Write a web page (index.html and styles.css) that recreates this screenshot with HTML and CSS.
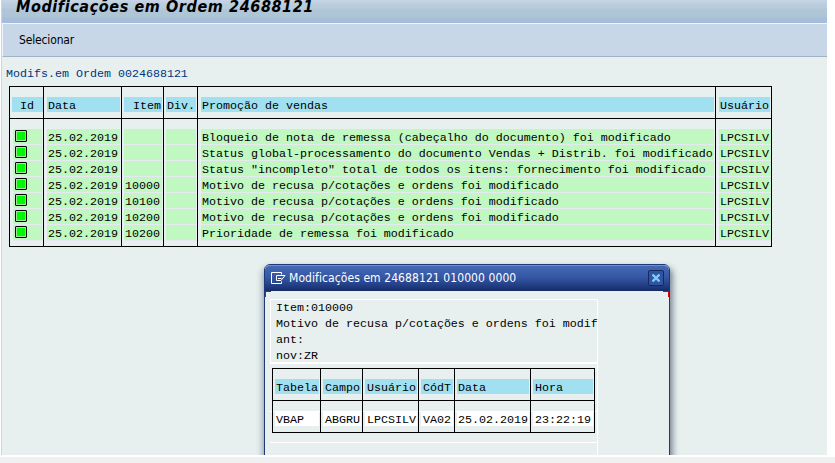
FILE: index.html
```html
<!DOCTYPE html>
<html lang="pt">
<head>
<meta charset="utf-8">
<title>Modificações em Ordem 24688121</title>
<link rel="stylesheet" href="styles.css">
</head>
<body>
<main class="screen">
  <header class="titlebar"><h1>Modificações em Ordem 24688121</h1></header>
  <nav class="toolbar"><span>Selecionar</span></nav>
  <section class="content">
    <p class="caption">Modifs.em Ordem 0024688121</p>
    <table class="list changes">
      <colgroup><col class="w34"><col class="w78"><col class="w42"><col class="w34"><col class="w518"><col class="w57"></colgroup>
      <thead><tr><th><b class="c">Id</b></th><th><b>Data</b></th><th><b class="r">Item</b></th><th><b class="div">Div.</b></th><th><b>Promoção de vendas</b></th><th><b>Usuário</b></th></tr></thead>
      <tbody>
        <tr class="space"><td></td><td></td><td></td><td></td><td></td><td></td></tr>
        <tr><td><b><i class="led"></i></b></td><td><b>25.02.2019</b></td><td><b></b></td><td><b></b></td><td><b>Bloqueio de nota de remessa (cabeçalho do documento) foi modificado</b></td><td><b>LPCSILV</b></td></tr>
        <tr><td><b><i class="led"></i></b></td><td><b>25.02.2019</b></td><td><b></b></td><td><b></b></td><td><b>Status global-processamento do documento Vendas + Distrib. foi modificado</b></td><td><b>LPCSILV</b></td></tr>
        <tr><td><b><i class="led"></i></b></td><td><b>25.02.2019</b></td><td><b></b></td><td><b></b></td><td><b>Status "incompleto" total de todos os itens: fornecimento foi modificado</b></td><td><b>LPCSILV</b></td></tr>
        <tr><td><b><i class="led"></i></b></td><td><b>25.02.2019</b></td><td><b>10000</b></td><td><b></b></td><td><b>Motivo de recusa p/cotações e ordens foi modificado</b></td><td><b>LPCSILV</b></td></tr>
        <tr><td><b><i class="led"></i></b></td><td><b>25.02.2019</b></td><td><b>10100</b></td><td><b></b></td><td><b>Motivo de recusa p/cotações e ordens foi modificado</b></td><td><b>LPCSILV</b></td></tr>
        <tr><td><b><i class="led"></i></b></td><td><b>25.02.2019</b></td><td><b>10200</b></td><td><b></b></td><td><b>Motivo de recusa p/cotações e ordens foi modificado</b></td><td><b>LPCSILV</b></td></tr>
        <tr><td><b><i class="led"></i></b></td><td><b>25.02.2019</b></td><td><b>10200</b></td><td><b></b></td><td><b>Prioridade de remessa foi modificado</b></td><td><b>LPCSILV</b></td></tr>
        <tr class="end"><td></td><td></td><td></td><td></td><td></td><td></td></tr>
      </tbody>
    </table>
  </section>

  <div class="popup-layer">
    <section class="popup">
      <header class="popup-title">
        <svg class="exit" width="15" height="12" viewBox="0 0 15 12" fill="none" stroke="#fff"><path d="M10.500 2.500V.5H.5V11.500H10.500V9.500M10 3.500H5.500V8.500H10M7 6.500H10.500M10 3.500H14L10 8.500"/></svg>
        <span>Modificações em 24688121 010000 0000</span>
        <button class="close" aria-label="Fechar"><svg width="8" height="8" viewBox="0 0 8 8" stroke="#7cc8fa" stroke-width="2.400"><path d="M.5 .5L7.500 7.500M7.500 .5L.5 7.500"/></svg></button>
      </header>
      <div class="popup-body">
        <div class="info"><p>Item:010000</p><p>Motivo de recusa p/cotações e ordens foi modif</p><p>ant:</p><p>nov:ZR</p></div>
        <div class="details">
          <table class="list fields">
            <colgroup><col class="w48"><col class="w42"><col class="w56"><col class="w36"><col class="w76"><col class="w65"></colgroup>
            <thead><tr><th><b>Tabela</b></th><th><b>Campo</b></th><th><b>Usuário</b></th><th><b>CódT</b></th><th><b>Data</b></th><th><b>Hora</b></th></tr></thead>
            <tbody>
              <tr class="space"><td></td><td></td><td></td><td></td><td></td><td></td></tr>
              <tr><td><b>VBAP</b></td><td><b>ABGRU</b></td><td><b>LPCSILV</b></td><td><b>VA02</b></td><td><b>25.02.2019</b></td><td><b>23:22:19</b></td></tr>
              <tr class="end"><td></td><td></td><td></td><td></td><td></td><td></td></tr>
            </tbody>
          </table>
        </div>
        <div class="rest"></div>
      </div>
    </section>
  </div>
</main>
<footer class="status"></footer>
</body>
</html>
```
FILE: styles.css
```css
* { box-sizing: border-box; }
body { margin: 0; width: 835px; height: 463px; overflow: hidden; background: #fff; font: 11.667px/16px "Liberation Mono", monospace; color: #000; }
h1, p { margin: 0; }
b { font-weight: normal; }
.screen { position: relative; width: 826px; height: 455px; margin-left: 1px; border-left: 1px solid #ccd5d8; background: #e7f0ef; overflow: hidden; }
.titlebar { height: 23px; background: linear-gradient(#c8d6e6 0, #c0cfe0 3px, #b5cddc 6px, #b5cddc 8px, #b4c5d8 9px, #acc6d6 15px, #abc5d6 17px, #abbdd8 18px, #a4bdd9 23px); }
.titlebar h1 { height: 14px; padding-left: 14px; font: italic bold 16px/14px "DejaVu Sans Condensed", "DejaVu Sans", sans-serif; font-stretch: condensed; letter-spacing: .6px; white-space: nowrap; }
.toolbar { height: 34px; border-top: 1px solid #eef5fb; border-bottom: 1px solid #9fb1c4; border-left: 1px solid #eef5fb; background: #c8d7e8; padding: 8px 0 0 16px; font: 12px/16px "DejaVu Sans Condensed", "DejaVu Sans", sans-serif; font-stretch: condensed; letter-spacing: -.15px; }
.content { padding: 9px 0 0 7px; }
.caption { margin-left: -3px; height: 20px; color: #003580; }

.list { table-layout: fixed; border-spacing: 0; border-collapse: separate; }
.list th, .list td { padding: 0; border-left: 1px solid #000; vertical-align: top; text-align: left; font-weight: normal; white-space: pre; }
.list th:last-child, .list td:last-child { border-right: 1px solid #000; }
.list th { height: 32px; border-top: 1px solid #000; padding-top: 10px; }
.list td { height: 16px; }
.list .space td { height: 11px; border-top: 1px solid #000; }
.list .end td { height: 6px; border-bottom: 1px solid #000; }
.list b { display: block; height: 15px; line-height: 18px; margin: 0 1px 0 3px; padding-left: 1px; }
.list th b { background: #a0e0f0; }
.list .c { text-align: center; margin-left: 2px; margin-right: 0; padding-left: 0; padding-right: 1px; }
.list .r { text-align: right; margin-left: 2px; margin-right: 1px; padding-right: 1px; }
.list .div { margin-left: 2px; }
.changes { width: 763px; }
.changes td b { background: #c1f7c1; box-shadow: 0 1px #e7e9f0; }
.changes td:nth-child(3) b, .changes td:nth-child(4) b { margin-left: 2px; }
.changes td:last-child b { margin-right: 0; }
.w34 { width: 34px; } .w78 { width: 78px; } .w42 { width: 42px; } .w518 { width: 518px; } .w57 { width: 57px; }
.w48 { width: 48px; } .w56 { width: 56px; } .w36 { width: 36px; } .w76 { width: 76px; } .w65 { width: 65px; }
.led { display: block; width: 12px; height: 12px; margin: 0 0 0 1px; transform: translateY(1px); border: 1px solid #000; border-radius: 1px; background: #00f800; box-shadow: inset 0 0 0 1px #9de89d; }

.popup-layer { position: absolute; left: 262px; top: 264px; }
.popup { width: 406px; height: 220px; border: 1px solid #1f3878; border-radius: 6px 6px 0 0; background: #e7f0ef; box-shadow: 3px 4px 6px rgba(40,50,80,.5), -2px 4px 6px rgba(40,50,80,.3); }
.popup-title { display: flex; align-items: center; height: 26px; padding: 0 5px 2px 6px; border-top: 1px solid #6b8fd6; border-radius: 5px 5px 0 0; background: linear-gradient(#4568b5, #3556a3 45%, #27458e 70%, #152b66); color: #fff; font: 12px/16px "DejaVu Sans Condensed", "DejaVu Sans", sans-serif; font-stretch: condensed; }
.popup-title span { margin-left: 3px; padding-top: 1px; white-space: nowrap; letter-spacing: .08px; }
.close { display: flex; align-items: center; justify-content: center; width: 16px; height: 16px; margin-left: auto; padding: 0; border: 1px solid #15285f; border-radius: 2px; background: #3054a0; }
.popup-body { padding: 8px 0 0 5px; background: linear-gradient(#e00000, #e00000) 0 0 / 6px 1px no-repeat, linear-gradient(#e00000, #e00000) 0 0 / 1px 6px no-repeat, linear-gradient(#e00000, #e00000) 100% 0 / 6px 1px no-repeat, linear-gradient(#e00000, #e00000) 100% 0 / 1px 6px no-repeat; }
.info { width: 328px; height: 63px; border: 1px solid #fff; border-bottom: 0; white-space: nowrap; padding-left: 5px; }
.details { width: 328px; height: 80px; border-top: 2px solid #fff; border-right: 1px solid #fff; padding: 4px 0 0 2px; background: linear-gradient(#fff, #fff) 0 47px / 100% 1px no-repeat; }
.rest { width: 328px; height: 40px; border-top: 1px solid #fff; border-right: 1px solid #fff; }
.fields { width: 323px; }
.fields th b { margin: 0 1px 0 2px; padding-left: 2px; }
.fields td b { background: #fff; margin-left: 2px; padding-left: 2px; }
.fields th:first-child b, .fields td:first-child b, .fields th:nth-child(5) b, .fields td:nth-child(5) b { padding-left: 1px; }
.status { width: 835px; height: 8px; border-top: 1px solid #fff; background: #f0f0f0; box-shadow: inset 0 1px #fff; }
```
